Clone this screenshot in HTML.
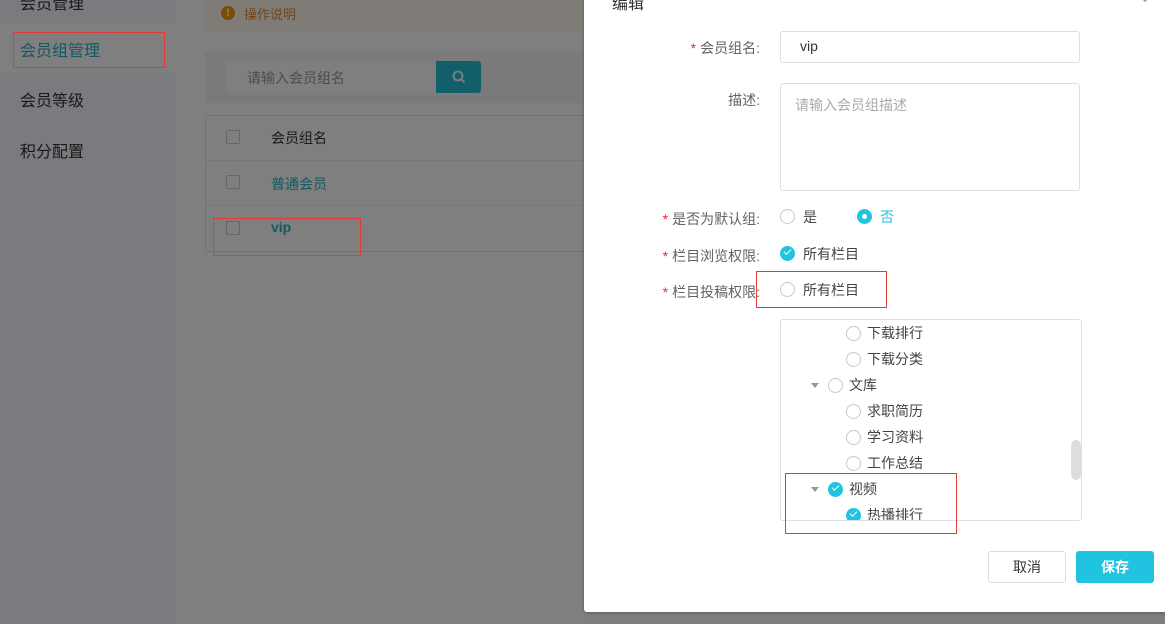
<!DOCTYPE html>
<html><head><meta charset="utf-8"><style>
*{margin:0;padding:0;box-sizing:border-box}
body{width:1165px;height:624px;overflow:hidden;position:relative;background:#fff;font-family:"Liberation Sans","Noto Sans CJK SC",sans-serif;font-size:14px;color:#333}
.a{position:absolute}
.side{left:0;top:0;width:175px;height:624px;background:#f4f7fd}
.rb{border:1px solid #e43a3a}
.cb{width:14px;height:14px;border:1px solid #ccc;border-radius:2px;background:#fff}
.modal{left:584px;top:0;width:581px;height:612px;background:#fff;border-radius:0 0 0 3px;box-shadow:0 1px 3px rgba(0,0,0,.3)}
.lab{color:#606266;font-size:14px;text-align:right;width:170px}
.lab i{color:#f5222d;font-style:normal;margin-right:4px}
.inp{border:1px solid #dcdfe6;border-radius:3px}
.rad{width:15px;height:15px;border:1px solid #c8c8c8;border-radius:50%;background:#fff}
.chk{width:15px;height:15px;border-radius:50%;background:#20c3e0}
.chk:after{content:"";position:absolute;left:4px;top:3px;width:6px;height:3px;border-left:1.5px solid #fff;border-bottom:1.5px solid #fff;transform:rotate(-45deg)}
.tri{width:0;height:0;border-left:4px solid transparent;border-right:4px solid transparent;border-top:5px solid #999}
.t{color:#444;font-size:14px}
.ov{left:0;top:0;width:1165px;height:624px;background:rgba(0,0,0,.5)}
</style></head><body>
<div class="a" style="left:0;top:0;width:1165px;height:624px;background:#fff"></div>
<div class="a side"></div>
<div class="a" style="left:0;top:23px;width:175px;height:50px;background:#fff"></div>
<div class="a" style="left:20px;top:-10px;font-size:16px;color:#333">会员管理</div>
<div class="a" style="left:20px;top:37px;font-size:16px;color:#24b3c9">会员组管理</div>
<div class="a" style="left:20px;top:87px;font-size:16px;color:#333">会员等级</div>
<div class="a" style="left:20px;top:138px;font-size:16px;color:#333">积分配置</div>
<div class="a" style="left:205px;top:0;width:390px;height:31px;background:#fff8ef;border-radius:3px"></div>
<div class="a" style="left:221px;top:6px;width:14px;height:14px;border-radius:50%;background:#f59a00;color:#fff;font-size:11px;text-align:center;line-height:14px;font-weight:bold">!</div>
<div class="a" style="left:244px;top:4px;font-size:13px;color:#e38c2c">操作说明</div>
<div class="a" style="left:205px;top:51px;width:390px;height:52px;background:#f5f5f5;border-radius:3px"></div>
<div class="a" style="left:226px;top:61px;width:212px;height:32px;background:#fff;border-radius:3px"></div>
<div class="a" style="left:247px;top:68px;font-size:14px;color:#999">请输入会员组名</div>
<div class="a" style="left:436px;top:61px;width:45px;height:32px;background:#22bfd6;border-radius:0 3px 3px 0"></div>
<svg class="a" style="left:451px;top:69px" width="16" height="16" viewBox="0 0 16 16"><circle cx="7" cy="7" r="4.5" fill="none" stroke="#fff" stroke-width="1.8"/><path d="M10.3 10.3L13.5 13.5" stroke="#fff" stroke-width="1.8"/></svg>
<div class="a" style="left:205px;top:115px;width:390px;height:137px;border:1px solid #e5e5e5;border-right:none;border-radius:3px 0 0 3px;background:#fff"></div>
<div class="a" style="left:206px;top:160px;width:390px;height:1px;background:#eee"></div>
<div class="a" style="left:206px;top:205px;width:390px;height:1px;background:#eee"></div>
<div class="a cb" style="left:226px;top:130px"></div>
<div class="a cb" style="left:226px;top:175px"></div>
<div class="a cb" style="left:226px;top:221px"></div>
<div class="a" style="left:271px;top:128px;color:#333">会员组名</div>
<div class="a" style="left:271px;top:174px;color:#24b3c9">普通会员</div>
<div class="a" style="left:271px;top:219px;color:#24b3c9;font-weight:bold">vip</div>
<div class="a ov"></div>
<div class="a rb" style="left:13px;top:32px;width:152px;height:36px"></div>
<div class="a rb" style="left:213px;top:218px;width:148px;height:38px"></div>

<div class="a modal"></div>
<div class="a" style="left:612px;top:-10px;font-size:16px;color:#333">编辑</div>
<svg class="a" style="left:1138px;top:-6px" width="16" height="12"><path d="M1 1L7 7L13 1" fill="none" stroke="#999" stroke-width="1.5"/></svg>
<div class="a lab" style="left:590px;top:38px"><i>*</i>会员组名:</div>
<div class="a inp" style="left:780px;top:31px;width:300px;height:32px"></div>
<div class="a" style="left:800px;top:38px;color:#333">vip</div>
<div class="a lab" style="left:590px;top:90px">描述:</div>
<div class="a inp" style="left:780px;top:83px;width:300px;height:108px"></div>
<div class="a" style="left:795px;top:95px;color:#aaa;font-size:14px">请输入会员组描述</div>
<div class="a lab" style="left:590px;top:209px"><i>*</i>是否为默认组:</div>
<div class="a rad" style="left:780px;top:209px"></div>
<div class="a t" style="left:803px;top:207px">是</div>
<div class="a" style="left:857px;top:209px;width:15px;height:15px;border-radius:50%;background:#20c3e0"><div style="margin:5px;width:5px;height:5px;border-radius:50%;background:#fff"></div></div>
<div class="a" style="left:880px;top:207px;color:#20c3e0">否</div>
<div class="a lab" style="left:590px;top:246px"><i>*</i>栏目浏览权限:</div>
<div class="a chk" style="left:780px;top:246px"></div>
<div class="a t" style="left:803px;top:244px">所有栏目</div>
<div class="a lab" style="left:590px;top:282px"><i>*</i>栏目投稿权限:</div>
<div class="a rad" style="left:780px;top:282px"></div>
<div class="a t" style="left:803px;top:280px">所有栏目</div>
<div class="a rb" style="left:756px;top:271px;width:131px;height:37px"></div>
<div class="a inp" style="left:780px;top:319px;width:302px;height:202px;overflow:hidden">
<div class="a rad" style="left:65px;top:6px"></div><div class="a t" style="left:86px;top:3px">下载排行</div>
<div class="a rad" style="left:65px;top:32px"></div><div class="a t" style="left:86px;top:29px">下载分类</div>
<div class="a tri" style="left:30px;top:63px"></div><div class="a rad" style="left:47px;top:58px"></div><div class="a t" style="left:68px;top:55px">文库</div>
<div class="a rad" style="left:65px;top:84px"></div><div class="a t" style="left:86px;top:81px">求职简历</div>
<div class="a rad" style="left:65px;top:110px"></div><div class="a t" style="left:86px;top:107px">学习资料</div>
<div class="a rad" style="left:65px;top:136px"></div><div class="a t" style="left:86px;top:133px">工作总结</div>
<div class="a tri" style="left:30px;top:167px"></div><div class="a chk" style="left:47px;top:162px"></div><div class="a t" style="left:68px;top:159px">视频</div>
<div class="a chk" style="left:65px;top:188px"></div><div class="a t" style="left:86px;top:185px">热播排行</div>
<div class="a" style="left:290px;top:120px;width:10px;height:40px;background:#ddd;border-radius:5px"></div>
</div>
<div class="a rb" style="left:785px;top:473px;width:172px;height:61px"></div>
<div class="a" style="left:988px;top:551px;width:78px;height:32px;border:1px solid #ddd;border-radius:3px;text-align:center;line-height:30px;color:#333">取消</div>
<div class="a" style="left:1076px;top:551px;width:78px;height:32px;background:#20c3e0;border-radius:3px;text-align:center;line-height:32px;color:#fff;font-weight:bold">保存</div>
</body></html>
